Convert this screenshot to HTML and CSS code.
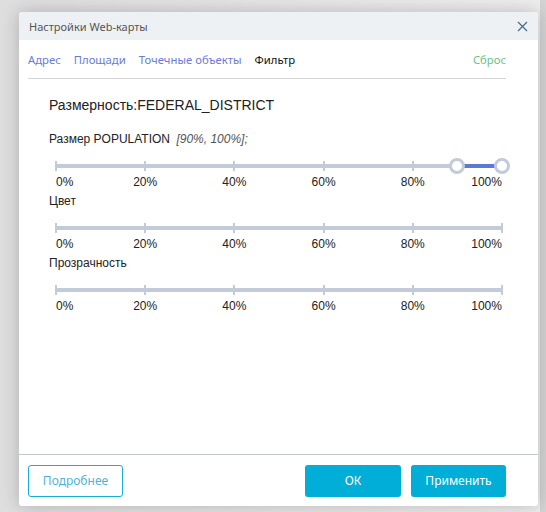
FILE: index.html
```html
<!DOCTYPE html>
<html lang="ru">
<head>
    <meta charset="UTF-8">
    <title>Настройки Web-карты</title>
    <link rel="stylesheet" href="styles.css">
</head>
<body>
    <div class="dialog">
        <div class="dialog-header">
            <span class="dialog-title">Настройки Web-карты</span>
            <svg class="close" width="11" height="11" viewBox="0 0 11 11">
                <path d="M1 1 L10 10 M10 1 L1 10" stroke="#4d6a92" stroke-width="1.3" fill="none"/>
            </svg>
        </div>
        <div class="tabs">
            <span class="tab">Адрес</span>
            <span class="tab">Площади</span>
            <span class="tab">Точечные объекты</span>
            <span class="tab active">Фильтр</span>
            <span class="reset">Сброс</span>
        </div>
        <div class="content">
            <div class="heading">Размерность:FEDERAL_DISTRICT</div>

            <div class="param-title">Размер POPULATION <i class="range">[90%, 100%];</i></div>
            <div class="slider">
                <div class="track"></div>
                <div class="tick" style="left: 0%"></div>
                <div class="tick" style="left: 20%"></div>
                <div class="tick" style="left: 40%"></div>
                <div class="tick" style="left: 60%"></div>
                <div class="tick" style="left: 80%"></div>
                <div class="tick" style="left: 100%"></div>
                <div class="selected" style="left: 90%; width: 10%"></div>
                <div class="handle" style="left: 90%"></div>
                <div class="handle" style="left: 100%"></div>
            </div>
            <div class="labels">
                <span>0%</span><span>20%</span><span>40%</span><span>60%</span><span>80%</span><span>100%</span>
            </div>

            <div class="param-title">Цвет</div>
            <div class="slider">
                <div class="track"></div>
                <div class="tick" style="left: 0%"></div>
                <div class="tick" style="left: 20%"></div>
                <div class="tick" style="left: 40%"></div>
                <div class="tick" style="left: 60%"></div>
                <div class="tick" style="left: 80%"></div>
                <div class="tick" style="left: 100%"></div>
            </div>
            <div class="labels">
                <span>0%</span><span>20%</span><span>40%</span><span>60%</span><span>80%</span><span>100%</span>
            </div>

            <div class="param-title">Прозрачность</div>
            <div class="slider">
                <div class="track"></div>
                <div class="tick" style="left: 0%"></div>
                <div class="tick" style="left: 20%"></div>
                <div class="tick" style="left: 40%"></div>
                <div class="tick" style="left: 60%"></div>
                <div class="tick" style="left: 80%"></div>
                <div class="tick" style="left: 100%"></div>
            </div>
            <div class="labels">
                <span>0%</span><span>20%</span><span>40%</span><span>60%</span><span>80%</span><span>100%</span>
            </div>
        </div>
        <div class="footer">
            <button class="btn btn-outline">Подробнее</button>
            <div class="footer-right">
                <button class="btn btn-ok">ОК</button>
                <button class="btn btn-apply">Применить</button>
            </div>
        </div>
    </div>
</body>
</html>
```

FILE: styles.css
```css
body {
    margin: 0;
    height: 512px;
    overflow: hidden;
    background: linear-gradient(to right, #dedede 0, #eeeeee 540px, #d4d4d4 540px);
    font-family: "Noto Sans", "Open Sans", sans-serif;
    padding-top: 12px;
}
.dialog {
    margin-left: 19px;
    width: 519px;
    height: 494px;
    background-color: #fff;
    border-radius: 3px;
    box-shadow: 0 0 18px rgba(0,0,0,0.22);
    display: flex;
    flex-direction: column;
    overflow: hidden;
}
.dialog-header {
    height: 28px;
    background-color: #eef1f4;
    display: flex;
    align-items: center;
    justify-content: space-between;
    padding: 0 10px 0 10px;
}
.dialog-title {
    font-size: 11px;
    color: #555;
}
.tabs {
    margin: 0 32px 0 9px;
    height: 38px;
    border-bottom: 1px solid #d6d6d6;
    display: flex;
    align-items: center;
    gap: 13px;
    font-size: 11.3px;
}
.tab {
    color: #6a7bd4;
}
.tab.active {
    color: #111;
}
.reset {
    margin-left: auto;
    color: #6cc283;
}
.content {
    flex: 1;
    padding: 18px 36px 0 30px;
    font-family: "Liberation Sans", Arial, sans-serif;
    color: #222;
}
.heading {
    font-size: 14px;
    line-height: 16px;
    margin-bottom: 18px;
}
.param-title {
    font-size: 12px;
    line-height: 16px;
    margin-top: 3px;
}
.range {
    color: #555;
    margin-left: 3px;
}
.slider {
    position: relative;
    height: 20px;
    margin: 9px 0 0 7px;
    width: 446px;
}
.track {
    position: absolute;
    left: 0;
    right: 0;
    top: 8px;
    height: 4px;
    background-color: #c3cad9;
}
.tick {
    position: absolute;
    top: 5px;
    width: 2px;
    height: 10px;
    margin-left: -1px;
    background-color: #c3cad9;
}
.tick:first-of-type {
    margin-left: 0;
}
.selected {
    position: absolute;
    top: 8px;
    height: 4px;
    background-color: #5a79d8;
}
.handle {
    position: absolute;
    top: 2px;
    width: 10px;
    height: 10px;
    margin-left: -8px;
    border: 3px solid #c3cad9;
    border-radius: 50%;
    background-color: #fff;
}
.labels {
    display: flex;
    justify-content: space-between;
    width: 446px;
    margin: -2px 0 0 7px;
    font-size: 12px;
    line-height: 16px;
}
.labels span {
    width: 0;
    display: flex;
    justify-content: center;
    white-space: nowrap;
}
.labels span:first-child {
    justify-content: flex-start;
}
.labels span:last-child {
    justify-content: flex-end;
}
.footer {
    border-top: 1px solid #c5cacf;
    height: 51px;
    display: flex;
    align-items: center;
    justify-content: space-between;
    padding: 0 32px 0 9px;
}
.footer-right {
    display: flex;
    gap: 10px;
}
.btn {
    height: 32px;
    border-radius: 3px;
    font-family: "Noto Sans", "Open Sans", sans-serif;
    font-size: 12px;
    cursor: pointer;
}
.btn-outline {
    width: 95px;
    background-color: #fff;
    border: 1px solid #16aed6;
    color: #4fb3d8;
}
.btn-ok,
.btn-apply {
    border: none;
    background-color: #00aed7;
    color: #fff;
}
.btn-ok {
    width: 96px;
}
.btn-apply {
    width: 95px;
}
```
